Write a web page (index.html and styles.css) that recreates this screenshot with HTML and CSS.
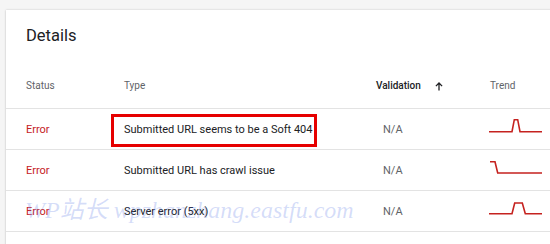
FILE: index.html
```html
<!DOCTYPE html>
<html>
<head>
<meta charset="utf-8">
<link rel="stylesheet" href="styles.css">
</head>
<body>
<div class="card">
  <h2 class="title">Details</h2>
  <div class="row head">
    <div class="cell">Status</div>
    <div class="cell">Type</div>
    <div class="cell val-head">Validation <svg class="arrow" width="8" height="9" viewBox="0 0 8 9"><path d="M4 8.5V1M0.9 4.1L4 1L7.1 4.1" fill="none" stroke="#202124" stroke-width="1.3"/></svg></div>
    <div class="cell trend-head">Trend</div>
  </div>
  <div class="row">
    <div class="cell err">Error</div>
    <div class="cell type">Submitted URL seems to be a Soft 404</div>
    <div class="cell na">N/A</div>
    <div class="cell trend"><svg width="56" height="24" viewBox="0 0 56 24"><polyline points="0,14.7 23,14.7 25.3,2.7 28.7,2.7 31,14.7 53,14.7" fill="none" stroke="#c5221f" stroke-width="1.6"/></svg></div>
    <div class="mark"></div>
  </div>
  <div class="row">
    <div class="cell err">Error</div>
    <div class="cell type">Submitted URL has crawl issue</div>
    <div class="cell na">N/A</div>
    <div class="cell trend"><svg width="56" height="24" viewBox="0 0 56 24"><polyline points="1,3.7 6,3.7 8.7,15 53,15" fill="none" stroke="#c5221f" stroke-width="1.6"/></svg></div>
  </div>
  <div class="row">
    <div class="cell err">Error</div>
    <div class="cell type">Server error (5xx)</div>
    <div class="cell na">N/A</div>
    <div class="cell trend"><svg width="56" height="24" viewBox="0 0 56 24"><polyline points="0,14.7 23,14.7 25.7,4 33.3,4 36.3,14.7 53,14.7" fill="none" stroke="#c5221f" stroke-width="1.6"/></svg></div>
    <div class="watermark">WP站长 wpzhanzhang.eastfu.com</div>
  </div>
</div>
</body>
</html>
```
FILE: styles.css
```css
html, body {
  margin: 0;
  padding: 0;
}
body {
  background: #f5f5f5;
  font-family: Roboto, "Noto Sans", Arial, sans-serif;
  width: 550px;
  height: 244px;
  overflow: hidden;
}
.card {
  margin: 10px 0 0 6px;
  width: 560px;
  height: 240px;
  background: #fff;
  box-shadow: 0 0 2px rgba(0,0,0,0.18), 0 1px 2px rgba(0,0,0,0.08);
}
.title {
  margin: 0;
  padding: 16px 0 0 20px;
  height: 44px;
  font-size: 16.5px;
  line-height: 20px;
  font-weight: 400;
  color: #202124;
}
.row {
  position: relative;
  display: grid;
  grid-template-columns: 98px 252px 114px 1fr;
  padding-left: 20px;
  height: 40px;
  align-items: center;
  border-bottom: 1px solid #e3e3e3;
  font-size: 11px;
  color: #202124;
}
.row.head {
  height: 38px;
  align-items: start;
  font-size: 10px;
  color: #5f6368;
}
.head .cell {
  padding-top: 10px;
  line-height: 12px;
}
.val-head {
  font-weight: 500;
  color: #202124;
  display: flex;
  align-items: center;
  gap: 14px;
}
.arrow {
  display: block;
}
.err {
  color: #c5221f;
}
.na {
  color: #5f6368;
  padding-left: 7px;
}
.trend {
  display: flex;
  align-items: center;
}
.trend svg {
  display: block;
  margin-left: -1px;
}
.mark {
  position: absolute;
  left: 105px;
  top: 5px;
  width: 200px;
  height: 27px;
  border: 3px solid #e60000;
}
.watermark {
  position: absolute;
  left: 19px;
  top: 5px;
  font-family: "Liberation Serif", "Noto Sans CJK SC", serif;
  font-style: italic;
  font-size: 24px;
  line-height: 28px;
  color: rgba(90, 120, 230, 0.26);
  white-space: nowrap;
  pointer-events: none;
}
```
